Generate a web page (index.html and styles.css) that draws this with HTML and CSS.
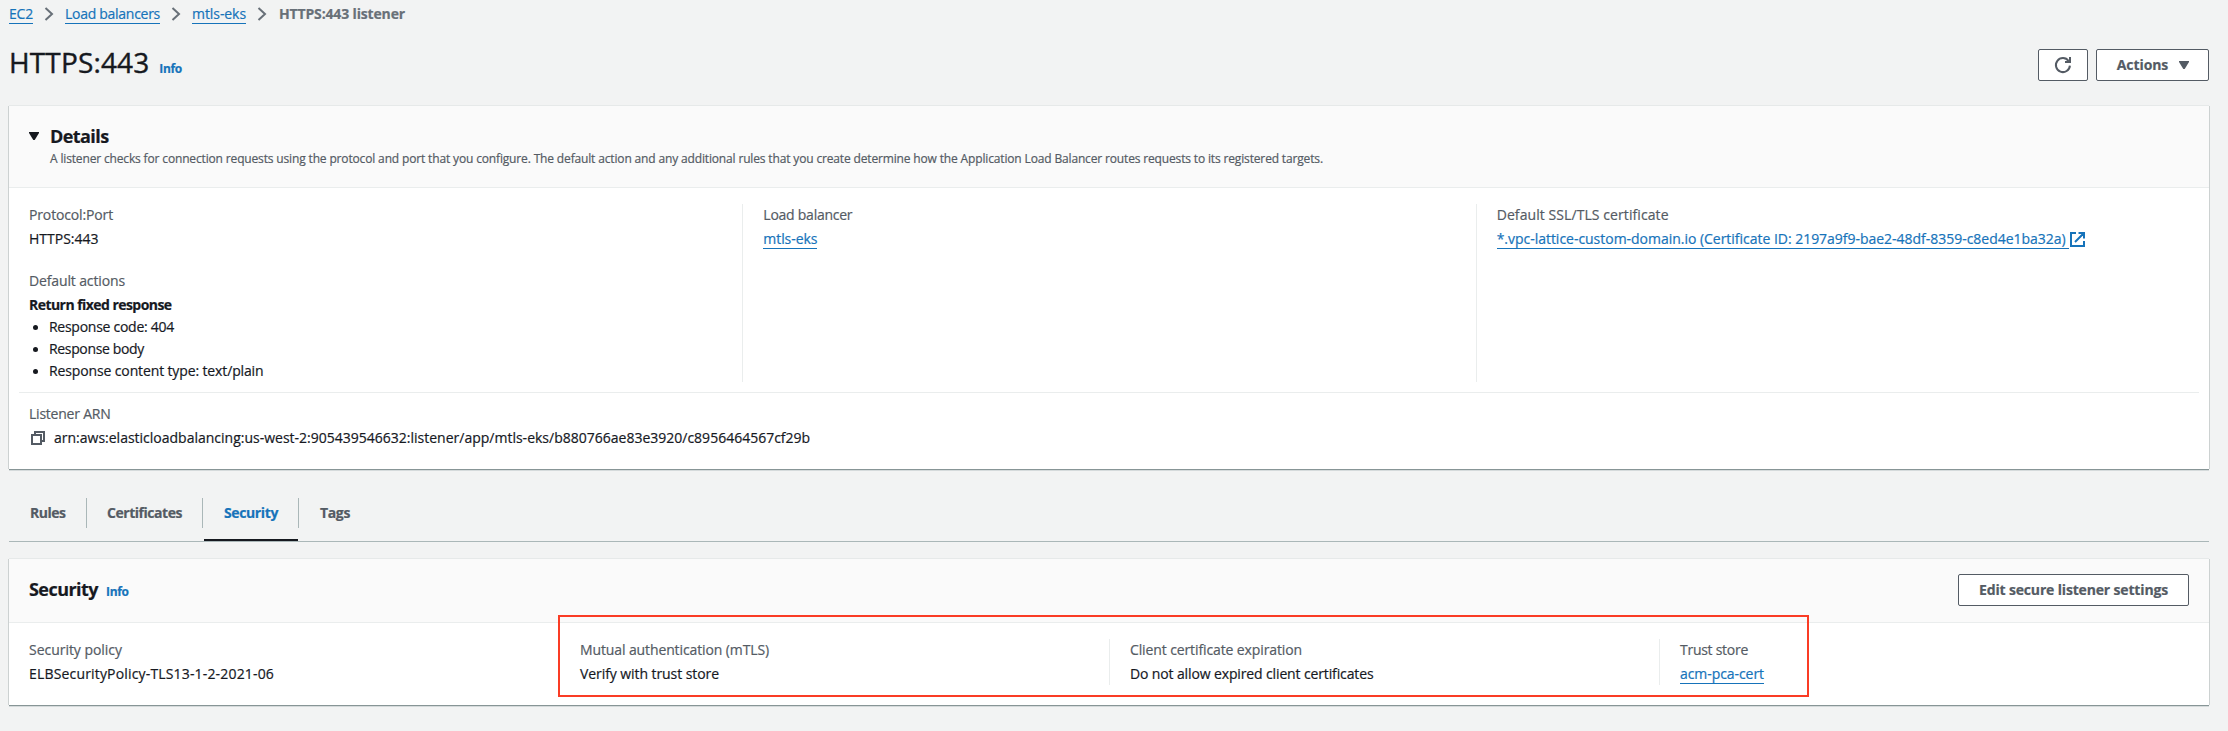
FILE: index.html
```html
<!DOCTYPE html>
<html lang="en">
<head>
<meta charset="utf-8">
<title>HTTPS:443 listener</title>
<link rel="stylesheet" href="styles.css">
</head>
<body>
<nav class="crumbs">
  <a class="link c-ec2" href="#">EC2</a>
  <svg class="chev" viewBox="0 0 10 16"><path d="M1.5 2l6.5 6-6.5 6"/></svg>
  <a class="link c-lbs" href="#">Load balancers</a>
  <svg class="chev" viewBox="0 0 10 16"><path d="M1.5 2l6.5 6-6.5 6"/></svg>
  <a class="link c-mtls" href="#">mtls-eks</a>
  <svg class="chev" viewBox="0 0 10 16"><path d="M1.5 2l6.5 6-6.5 6"/></svg>
  <span class="current">HTTPS:443 listener</span>
</nav>

<header class="page-head">
  <div class="title-row"><h1>HTTPS:443</h1><a class="info" href="#">Info</a></div>
  <div class="actions">
    <button class="btn btn-icon" aria-label="Refresh"><svg width="18" height="18" viewBox="0 0 18 18"><path class="stroke" d="M15.9 9.6A7 7 0 1 1 14.6 5"/><path class="stroke" d="M16 1v5h-5"/></svg></button>
    <button class="btn btn-actions"><span>Actions</span><svg width="10" height="8" viewBox="0 0 10 8"><path d="M0 0h10v1L5.7 8H4.3L0 1z"/></svg></button>
  </div>
</header>

<section class="panel details">
  <div class="panel-head details-head">
    <svg class="caret" width="10" height="8" viewBox="0 0 10 8"><path d="M0 0h10v1L5.7 8H4.3L0 1z"/></svg>
    <div>
      <h2 class="t-details">Details</h2>
      <p class="desc">A listener checks for connection requests using the protocol and port that you configure. The default action and any additional rules that you create determine how the Application Load Balancer routes requests to its registered targets.</p>
    </div>
  </div>
  <div class="panel-body">
    <div class="cols cols-3">
      <div class="col">
        <div class="label t-port">Protocol:Port</div>
        <div class="value">HTTPS:443</div>
        <div class="group">
          <div class="label t-default">Default actions</div>
          <div class="value strong">Return fixed response</div>
          <ul>
            <li class="t-code">Response code: 404</li>
            <li class="t-body">Response body</li>
            <li class="t-type">Response content type: text/plain</li>
          </ul>
        </div>
      </div>
      <div class="col">
        <div class="label t-lb">Load balancer</div>
        <div class="value"><a class="link c-mtls" href="#">mtls-eks</a></div>
      </div>
      <div class="col">
        <div class="label t-ssl">Default SSL/TLS certificate</div>
        <div class="value cert"><a class="link t-cert" href="#">*.vpc-lattice-custom-domain.io (Certificate ID: 2197a9f9-bae2-48df-8359-c8ed4e1ba32a)</a><svg class="ext" width="15" height="15" viewBox="0 0 15 15"><path d="M6 1H1v13h13V9M8.5 1H14v5.5M14 1L5 10"/></svg></div>
      </div>
    </div>
    <div class="arn">
      <div class="label t-arnlabel">Listener ARN</div>
      <div class="value arn-value"><svg width="14" height="14" viewBox="0 0 14 14"><path d="M1 4h9v9H1z"/><path d="M4 4V1h9v9h-3"/></svg><span>arn:aws:elasticloadbalancing:us-west-2:905439546632:listener/app/mtls-eks/b880766ae83e3920/c8956464567cf29b</span></div>
    </div>
  </div>
</section>

<nav class="tabs">
  <a class="tab tab-rules" href="#"><span>Rules</span></a>
  <a class="tab tab-certs" href="#"><span>Certificates</span></a>
  <a class="tab tab-security active" href="#"><span>Security</span></a>
  <a class="tab tab-tags" href="#"><span>Tags</span></a>
</nav>

<section class="panel security">
  <div class="panel-head security-head">
    <div class="title-row"><h2 class="t-sec">Security</h2><a class="info" href="#">Info</a></div>
    <button class="btn btn-edit">Edit secure listener settings</button>
  </div>
  <div class="panel-body">
    <div class="cols cols-4">
      <div class="col"><div class="label t-policy">Security policy</div><div class="value t-elb">ELBSecurityPolicy-TLS13-1-2-2021-06</div></div>
      <div class="col"><div class="label t-mutual">Mutual authentication (mTLS)</div><div class="value t-verify">Verify with trust store</div></div>
      <div class="col"><div class="label t-client">Client certificate expiration</div><div class="value t-expired">Do not allow expired client certificates</div></div>
      <div class="col"><div class="label t-trust">Trust store</div><div class="value"><a class="link t-acm" href="#">acm-pca-cert</a></div></div>
    </div>
  </div>
  <div class="highlight"></div>
</section>
</body>
</html>
```

FILE: styles.css
```css
* { box-sizing: border-box; }
body {
  margin: 0;
  height: 731px;
  padding: 3px 19px 0 9px;
  background: #f2f3f3;
  color: #16191f;
  font: 14px/22px "Open Sans", "Noto Sans", sans-serif;
  -webkit-text-stroke-width: .2px;
  white-space: nowrap;
  overflow: hidden;
}
h1, h2, p, ul { margin: 0; padding: 0; }
a { color: #1673ba; text-decoration: none; }
svg { display: block; flex: none; }

.link { display: inline-block; height: 21px; border-bottom: 1px solid #1673ba; }

.crumbs { display: flex; height: 22px; }
.chev { width: 10px; height: 16px; margin: 3px 11px 0 11px; }
.chev path { fill: none; stroke: #687078; stroke-width: 2; }
.c-ec2 { width: 24px; letter-spacing: -.2px; }
.c-lbs { width: 95px; letter-spacing: -.28px; }
.c-mtls { width: 54px; letter-spacing: -.07px; }
.current { color: #687078; font-weight: 700; letter-spacing: -.154px; margin-left: 1px; }

.page-head { display: flex; justify-content: space-between; margin-top: 19px; height: 61px; }
.title-row { display: flex; align-items: baseline; }
h1 { font-size: 28px; line-height: 36px; font-weight: 400; letter-spacing: .14px; -webkit-text-stroke-width: .4px; }
.info { font-size: 12px; font-weight: 700; letter-spacing: -.36px; margin-left: 10px; }
.actions { display: flex; gap: 8px; padding-top: 5px; }
.btn {
  display: flex;
  align-items: center;
  justify-content: center;
  height: 32px;
  padding: 0;
  border: 1px solid #545b64;
  border-radius: 2px;
  background: #fff;
  color: #545b64;
  font: 700 14px/22px "Open Sans", "Noto Sans", sans-serif;
}
.btn svg { fill: #545b64; }
.btn .stroke { fill: none; stroke: #545b64; stroke-width: 2; }
.btn-icon { width: 50px; }
.btn-actions { width: 113px; gap: 11px; letter-spacing: -.08px; padding-left: 1px; }
.btn-edit { width: 231px; letter-spacing: -.16px; }

.panel {
  position: relative;
  background: #fff;
  box-shadow: 0 1px 0 #879596, 0 2px 0 #d5dadb, 1px 0 0 #ccd1d1, -1px 0 0 #ccd1d1, 0 -1px 0 #e6e9e9;
}
.panel-head { background: #fafafa; border-bottom: 1px solid #eaeded; }
.details { height: 363px; margin-top: 1px; }
.details-head { display: flex; height: 82px; padding: 19px 20px 0; }
.caret { margin: 7px 11px 0 0; fill: #16191f; }
h2 { font-size: 18px; line-height: 22px; font-weight: 700; }
.t-details { letter-spacing: -.58px; }
.desc { font-size: 12px; line-height: 16px; margin-top: 4px; color: #545b64; letter-spacing: -.152px; }
.panel-body { padding-top: 16px; }
.cols { display: grid; }
.cols-3 { grid-template-columns: repeat(3, 1fr); }
.cols-4 { grid-template-columns: repeat(4, 1fr); }
.col { padding-left: 20px; }
.col + .col { border-left: 1px solid #eaeded; }
.label { color: #545b64; margin-bottom: 2px; }
.value { height: 22px; }
.group { margin-top: 20px; }
.strong { font-weight: 700; letter-spacing: -.55px; }
ul { list-style: none; }
li { position: relative; padding-left: 20px; }
li::before { content: ""; position: absolute; left: 4px; top: 9px; width: 5px; height: 5px; border-radius: 50%; background: #16191f; }
.cert { display: flex; }
.t-cert { width: 572px; }
.ext { margin: 4px 0 0 1px; }
.ext path { fill: none; stroke: #1673ba; stroke-width: 2; }
.arn { margin: 10px 10px 0; border-top: 1px solid #eaeded; padding: 10px 10px 0; }
.arn-value { display: flex; }
.arn-value svg { margin: 4px 9px 0 2px; }
.arn-value path { fill: none; stroke: #545b64; stroke-width: 2; }

.t-port { letter-spacing: -.144px; }
.t-default { letter-spacing: -.13px; }
.t-code { letter-spacing: -.267px; }
.t-body { letter-spacing: -.345px; }
.t-type { letter-spacing: -.129px; }
.t-lb { letter-spacing: -.25px; }
.t-ssl { letter-spacing: .08px; }
.t-cert { letter-spacing: -.024px; }
.t-arnlabel { letter-spacing: -.227px; }

.tabs { display: flex; height: 45px; margin-top: 28px; border-bottom: 1px solid #aab7b8; }
.tab { position: relative; height: 44px; padding: 5px 0 0 20px; color: #545b64; font-weight: 700; }
.tab + .tab::before { content: ""; position: absolute; left: -1px; top: 1px; width: 1px; height: 30px; background: #aab7b8; }
.tab-rules { width: 78px; padding-left: 21px; letter-spacing: -.49px; }
.tab-certs { width: 116px; letter-spacing: -.46px; }
.tab-security { width: 96px; padding-left: 21px; letter-spacing: -.38px; }
.tab-tags { padding-left: 21px; letter-spacing: -.36px; }
.active { color: #1673ba; }
.active::after { content: ""; position: absolute; left: 1px; right: 1px; bottom: 0; height: 2px; background: #16191f; }

.security { height: 146px; margin-top: 17px; }
.security-head { display: flex; justify-content: space-between; height: 64px; padding: 15px 20px 0; }
.security-head .title-row { padding-top: 4px; }
.security .info { margin-left: 8px; }
.t-sec { letter-spacing: -.54px; }
.t-policy { letter-spacing: -.034px; }
.t-elb { letter-spacing: .168px; }
.t-mutual { letter-spacing: -.114px; }
.t-verify { letter-spacing: -.073px; }
.t-client { letter-spacing: -.115px; }
.t-expired { letter-spacing: -.128px; }
.t-trust { letter-spacing: -.271px; }
.t-acm { width: 84px; letter-spacing: -.066px; }

/* Callout frame drawn over the mutual TLS columns */
.highlight { position: absolute; left: 549px; top: 56px; width: 1251px; height: 82px; border: 2px solid #fa3c25; }
```
